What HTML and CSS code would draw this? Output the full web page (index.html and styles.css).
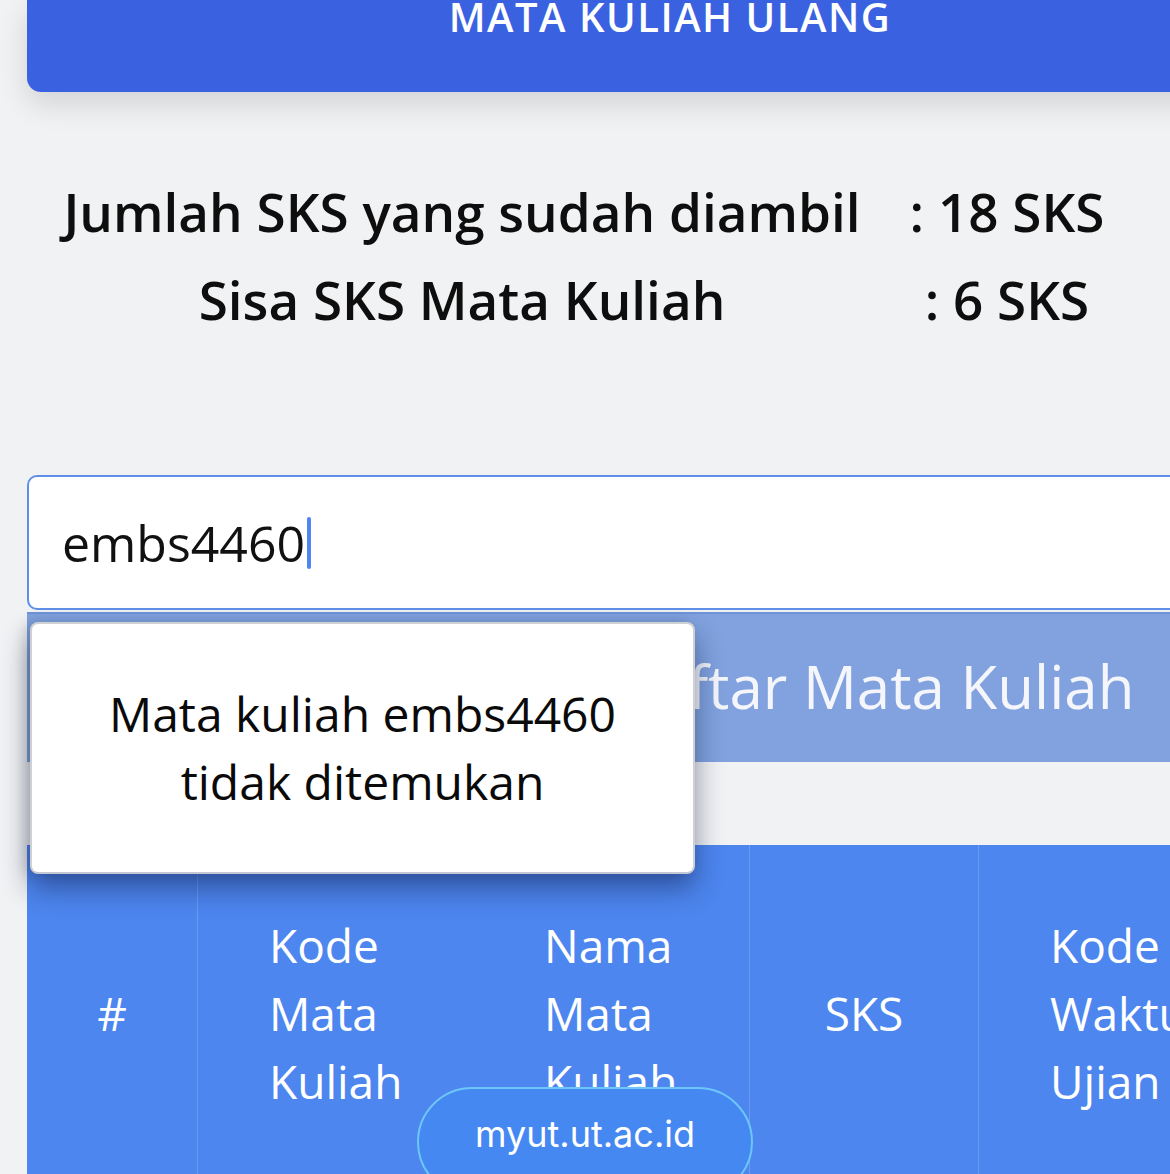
FILE: index.html
```html
<!DOCTYPE html>
<html lang="id">
<head>
<meta charset="utf-8">
<title>Mata Kuliah Ulang</title>
<link rel="stylesheet" href="styles.css">
</head>
<body>
<div class="page">
  <header class="title-card">
    <h1 class="title">MATA KULIAH ULANG</h1>
  </header>

  <section class="stats">
    <div class="stat-label">Jumlah SKS yang sudah diambil</div>
    <div class="stat-value">: 18 SKS</div>
    <div class="stat-label">Sisa SKS Mata Kuliah</div>
    <div class="stat-value">: 6 SKS</div>
  </section>

  <div class="search-area">
    <div class="search-input"><span class="typed">embs4460</span><span class="caret"></span></div>
    <button class="list-btn" type="button">Daftar Mata Kuliah</button>
    <div class="popup">
      <p class="popup-text">Mata kuliah embs4460<br>tidak ditemukan</p>
    </div>
  </div>

  <table class="course-table">
    <thead>
      <tr>
        <th class="col-no">#</th>
        <th class="col-kode">Kode<br>Mata<br>Kuliah</th>
        <th class="col-nama">Nama<br>Mata<br>Kuliah</th>
        <th class="col-sks">SKS</th>
        <th class="col-waktu">Kode<br>Waktu<br>Ujian</th>
      </tr>
    </thead>
  </table>
</div>
<div class="url-pill">myut.ut.ac.id</div>
</body>
</html>
```

FILE: styles.css
```css
html, body {
  margin: 0;
  padding: 0;
}
body {
  background: #f1f2f4;
  font-family: "Open Sans", "DejaVu Sans", sans-serif;
  width: 1170px;
  height: 1174px;
  overflow: hidden;
  position: relative;
}
.page {
  margin-left: 27px;
  width: 1286px;
}
.title-card {
  background: #3a62e0;
  height: 92px;
  border-radius: 0 0 14px 14px;
  box-shadow: 0 12px 30px rgba(0, 0, 0, 0.13);
  text-align: center;
  overflow: hidden;
}
.title {
  margin: -3px 0 0;
  font-size: 40px;
  line-height: 40px;
  font-weight: 600;
  letter-spacing: 1.5px;
  color: #ffffff;
}
.stats {
  display: grid;
  grid-template-columns: 870px 220px;
  margin-top: 76px;
}
.stat-label, .stat-value {
  text-align: center;
  white-space: nowrap;
  font-size: 53px;
  font-weight: 600;
  line-height: 88px;
  color: #0e0e0e;
}
.search-area {
  position: relative;
  margin-top: 131px;
}
.search-input {
  box-sizing: border-box;
  height: 135px;
  background: #ffffff;
  border: 2px solid #5f8fe8;
  border-radius: 10px;
  padding-left: 33px;
  display: flex;
  align-items: center;
  font-size: 50px;
  font-weight: 500;
  color: #111111;
}
.caret {
  display: inline-block;
  width: 4px;
  height: 52px;
  margin-left: 2px;
  background: #4d86ef;
  border-radius: 2px;
}
.list-btn {
  display: block;
  box-sizing: border-box;
  width: 100%;
  height: 150px;
  margin-top: 2px;
  border: none;
  border-top: 2px solid #6f93d8;
  background: #81a2de;
  color: #f4f6fb;
  font-family: inherit;
  font-size: 60px;
  font-weight: 500;
  text-align: left;
  padding: 0 0 4px 584px;
}
.popup {
  position: absolute;
  left: 3px;
  top: 147px;
  width: 665px;
  height: 252px;
  box-sizing: border-box;
  background: #ffffff;
  border: 2px solid #cfd0d3;
  border-bottom-color: #c3c8d4;
  border-radius: 8px;
  box-shadow: 0 14px 28px rgba(10, 20, 60, 0.45), -6px 0 12px rgba(0, 0, 0, 0.1);
  display: flex;
  align-items: center;
  justify-content: center;
  z-index: 2;
}
.popup-text {
  margin: 0;
  text-align: center;
  font-size: 48px;
  font-weight: 500;
  line-height: 68px;
  color: #0a0a0a;
}
.course-table {
  margin-top: 83px;
  width: 100%;
  border-collapse: collapse;
  background: #4d86ef;
}
.course-table th {
  color: #ffffff;
  font-size: 46px;
  font-weight: 500;
  line-height: 68px;
  padding: 66px 0 120px;
  text-align: left;
  vertical-align: top;
}
.course-table .col-no {
  width: 170px;
  text-align: center;
  padding-top: 134px;
  border-right: 1px solid #6c9cf2;
}
.course-table .col-kode {
  width: 204px;
  padding-left: 71px;
}
.course-table .col-nama {
  width: 205px;
  padding-left: 71px;
  border-right: 1px solid #6c9cf2;
}
.course-table .col-sks {
  width: 228px;
  text-align: center;
  padding-top: 134px;
  border-right: 1px solid #6c9cf2;
}
.course-table .col-waktu {
  padding-left: 71px;
}
.url-pill {
  position: absolute;
  left: 417px;
  top: 1087px;
  width: 336px;
  height: 110px;
  box-sizing: border-box;
  border: 2px solid #6cc6f8;
  border-radius: 55px;
  background: #4588f2;
  color: #ffffff;
  font-family: Inter, Roboto, sans-serif;
  font-size: 36px;
  text-align: center;
  padding-top: 23px;
  z-index: 3;
}
```
